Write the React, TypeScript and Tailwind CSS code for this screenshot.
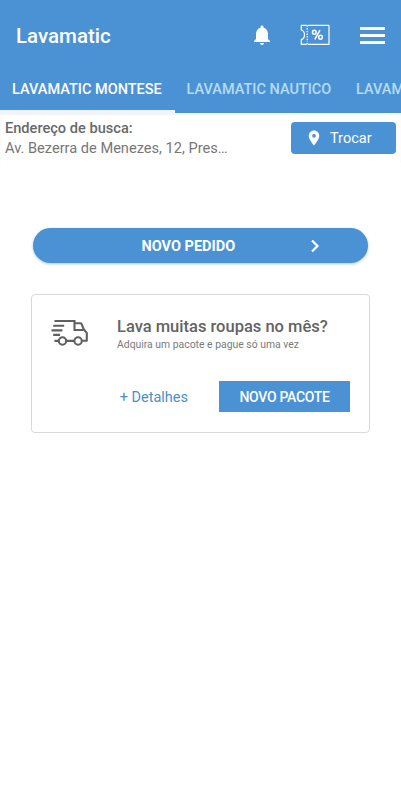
import React, { useState } from 'react';

const stores = [
  { name: 'LAVAMATIC MONTESE', width: 'w-[174.5px]' },
  { name: 'LAVAMATIC NAUTICO', width: 'w-[169.5px]' },
  { name: 'LAVAMATIC ALDEOTA', width: 'w-[170px]' },
];

function BellIcon() {
  return (
    <svg width="24" height="24" viewBox="0 0 24 24" fill="white">
      <path d="M12 22c1.1 0 2-.9 2-2h-4c0 1.1.9 2 2 2zm6-6v-5c0-3.07-1.63-5.64-4.5-6.32V4c0-.83-.67-1.5-1.5-1.5s-1.5.67-1.5 1.5v.68C7.64 5.36 6 7.92 6 11v5l-2 2v1h16v-1l-2-2z" />
    </svg>
  );
}

function CouponIcon() {
  return (
    <svg width="30" height="22" viewBox="0 0 30 22" fill="none" stroke="white" strokeWidth="1.2">
      <path d="M1.3 1.300h4.900q1 1.600 2 0H29v19H8.200q-1-1.600-2 0H1.300v-4.700c4.300-1.300 4.300-8.300 0-9.600z" strokeLinejoin="round" />
      <path d="M7.200 4v14" strokeWidth="1.200" strokeDasharray="1.500 1.200" />
      <ellipse cx="14.300" cy="8.300" rx="1.800" ry="2" strokeWidth="1.500" />
      <ellipse cx="20.500" cy="13.300" rx="1.800" ry="2" strokeWidth="1.500" />
      <path d="m20 6.200-5.200 9.200" strokeWidth="1.500" />
    </svg>
  );
}

function TruckIcon() {
  return (
    <svg width="38" height="28" viewBox="0 0 38 28" fill="none" stroke="#606060" strokeWidth="2.1">
      <path d="M3.500 3h20v9h8.800" />
      <path d="M23.500 5.300h6.100q.6 0 .9.600l2.300 5.600 3 3.400v7.800h-4.500" strokeLinejoin="round" />
      <path d="M2.200 7.800h11M.5 12.400h10.900M2.200 16.900h6.800M3.400 22.900H8M15.300 22.900h8" />
      <circle cx="11.500" cy="23" r="3.700" />
      <circle cx="27.100" cy="23" r="3.700" />
    </svg>
  );
}

function Header() {
  const [active, setActive] = useState(0);

  return (
    <header className="flex h-[113px] flex-col bg-[#4b92d4] text-white">
      <div className="flex h-[70px] items-center pl-4 pr-4">
        <h1 className="flex-1 pt-0.5 text-[20.500px] font-medium">Lavamatic</h1>
        <button className="mr-[26px]">
          <BellIcon />
        </button>
        <button className="mr-[30px]">
          <CouponIcon />
        </button>
        <button className="flex w-[25px] flex-col gap-[4px]">
          <span className="h-[3px] bg-white" />
          <span className="h-[3px] bg-white" />
          <span className="h-[3px] bg-white" />
        </button>
      </div>

      <nav className="flex flex-1 overflow-hidden">
        {stores.map((store, i) => (
          <button
            key={store.name}
            onClick={() => setActive(i)}
            className={`${store.width} shrink-0 whitespace-nowrap border-b-[3px] pl-3 pb-px text-left text-[14.500px] font-medium ${
              active === i ? 'border-[#eef5fa] text-white' : 'border-transparent text-[#b5dcf6]'
            }`}
          >
            {store.name}
          </button>
        ))}
      </nav>
    </header>
  );
}

export default function App() {
  return (
    <div className="h-[800px] w-[401px] overflow-hidden bg-white font-['Roboto',sans-serif]">
      <Header />

      {/* Search address */}
      <section className="flex h-[50px] justify-between pl-[5px] pr-[5px] shadow-[inset_0_2px_2px_#f3f3f3]">
        <div className="pt-[6px] text-[#696969]">
          <p className="text-[14.600px] font-medium leading-[19px]">Endereço de busca:</p>
          <p className="text-[14.600px] leading-5 text-[#777777]">Av. Bezerra de Menezes, 12, Pres…</p>
        </div>
        <button className="mt-[9px] flex h-[32px] w-[105px] items-center rounded bg-[#4b92d4] pl-[14px] text-[14.500px] text-white">
          <svg className="mr-[7px]" width="18" height="18" viewBox="0 0 24 24" fill="white">
            <path d="M12 2C8.130 2 5 5.130 5 9c0 5.250 7 13 7 13s7-7.750 7-13c0-3.870-3.130-7-7-7zm0 9.500a2.500 2.500 0 1 1 0-5 2.500 2.500 0 0 1 0 5z" />
          </svg>
          <span className="pt-[2px]">Trocar</span>
        </button>
      </section>

      <main className="pl-[31px] pr-[31px] pt-[65px]">
        <button className="mx-[2px] flex h-[35px] w-[335px] items-center rounded-full bg-[#4b92d4] pl-[108.500px] text-[14.500px] font-bold text-white shadow-[0_1px_3px_#a9c9e5]">
          <span className="w-[167px] pt-[2px] text-left">NOVO PEDIDO</span>
          <svg width="12" height="14" viewBox="0 0 12 14" fill="none" stroke="white" strokeWidth="2.200">
            <path d="m3 1.500 5.500 5.500L3 12.500" />
          </svg>
        </button>

        {/* Package offer */}
        <section className="mt-[31px] h-[139px] rounded border border-[#d9d9d9] pl-[19px] pr-[19px] pt-[22px]">
          <div className="flex">
            <div className="w-[66px] pt-[1px]">
              <TruckIcon />
            </div>
            <div>
              <h2 className="whitespace-nowrap text-[16.500px] font-medium leading-5 text-[#636363]">Lava muitas roupas no mês?</h2>
              <p className="text-[10.400px] leading-[15px] text-[#7b7b7b]">Adquira um pacote e pague só uma vez</p>
            </div>
          </div>
          <div className="mt-[29px] flex h-[31px] items-center justify-end">
            <button className="mr-[31px] pt-[3px] text-[14.500px] text-[#4b8fc7]">+ Detalhes</button>
            <button className="h-[31px] w-[131px] bg-[#4b92d4] pt-[2px] text-[14px] font-medium tracking-[-0.3px] text-white">NOVO PACOTE</button>
          </div>
        </section>
      </main>
    </div>
  );
}
